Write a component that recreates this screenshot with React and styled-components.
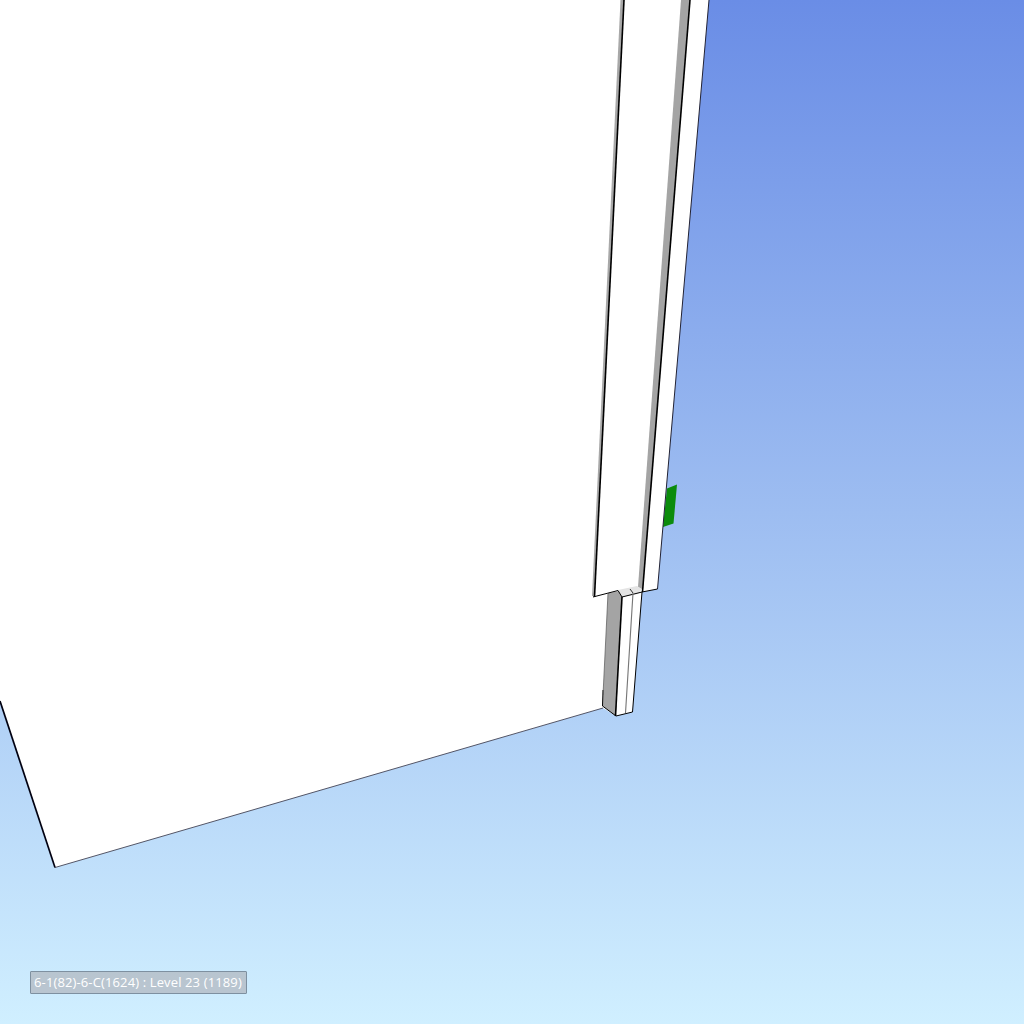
import React from "react";
import styled, { createGlobalStyle } from "styled-components";

const Global = createGlobalStyle`
  html, body { margin: 0; padding: 0; background: #cfeeff; }
  #root { width: 1024px; height: 1024px; }
`;

const Viewport = styled.main`
  position: relative;
  width: 1024px;
  height: 1024px;
  overflow: hidden;
  background: linear-gradient(180deg, #6a8de6 0%, #9dbdf1 50%, #d0efff 100%);
`;

const Model = styled.svg`
  display: block;
  width: 1024px;
  height: 1024px;
`;

const StatusLabel = styled.div`
  position: absolute;
  left: 30px;
  top: 971px;
  box-sizing: border-box;
  width: 217px;
  height: 23px;
  padding-left: 3px;
  background: rgba(171, 172, 177, 0.6);
  border: 1px solid #7e90a0;
  border-radius: 1px;
  color: #fff;
  font: 13px/21px "Open Sans", "Liberation Sans", sans-serif;
  letter-spacing: 0.13px;
  white-space: nowrap;
`;

const Edge = ({ d, w = 1, c = "#000" }) => <path d={d} fill="none" stroke={c} strokeWidth={w} />;

export default function App() {
  return (
    <Viewport>
      <Global />
      <Model viewBox="0 0 1024 1024" aria-label="3D model view">
        {/* white body */}
        <path d="M0 0H709L657.500 589L642 592L632.500 712L616 716L603 708L55 867.500L0 701Z" fill="#fff" />
        {/* shaded faces */}
        <path d="M620.500 0H624L594.500 596L592 596Z" fill="#a8a8a8" />
        <path d="M681 0H690L643 590L638 587Z" fill="#a4a4a4" />
        <path d="M608 593L620 591L622 597L616 716L602.500 706Z" fill="#a4a4a4" />
        <path d="M618 590L622 597L638 594L642 589L637 586Z" fill="#e4e4e4" />
        <path d="M663 527L667 488.500L677 484.500L673.500 523.500Z" fill="#0c8c0c" />
        {/* edges */}
        <Edge d="M624 0L594.500 597" w={1.6} />
        <Edge d="M690 0L642.500 592" w={1.6} />
        <Edge d="M709 0L657.500 589" w={1} c="#223" />
        <Edge d="M593 597L618 590.500L622 597L642 592L657.500 589" w={1} />
        <Edge d="M622 597L615.500 716" w={1.6} />
        <Edge d="M633 593L625.500 713" w={1.1} c="#777" />
        <Edge d="M642 592L632.500 712L616 716L602.500 706L603 690" w={1} />
        <Edge d="M608 593L603 695" w={0.7} c="#555" />
        <Edge d="M603 708L55 867.500" w={0.9} c="#445" />
        <Edge d="M0 701L55 867.500" w={1.7} c="#001" />
        <Edge d="M630 589L633 593" w={0.8} />
      </Model>
      <StatusLabel>6-1(82)-6-C(1624) : Level 23 (1189)</StatusLabel>
    </Viewport>
  );
}
